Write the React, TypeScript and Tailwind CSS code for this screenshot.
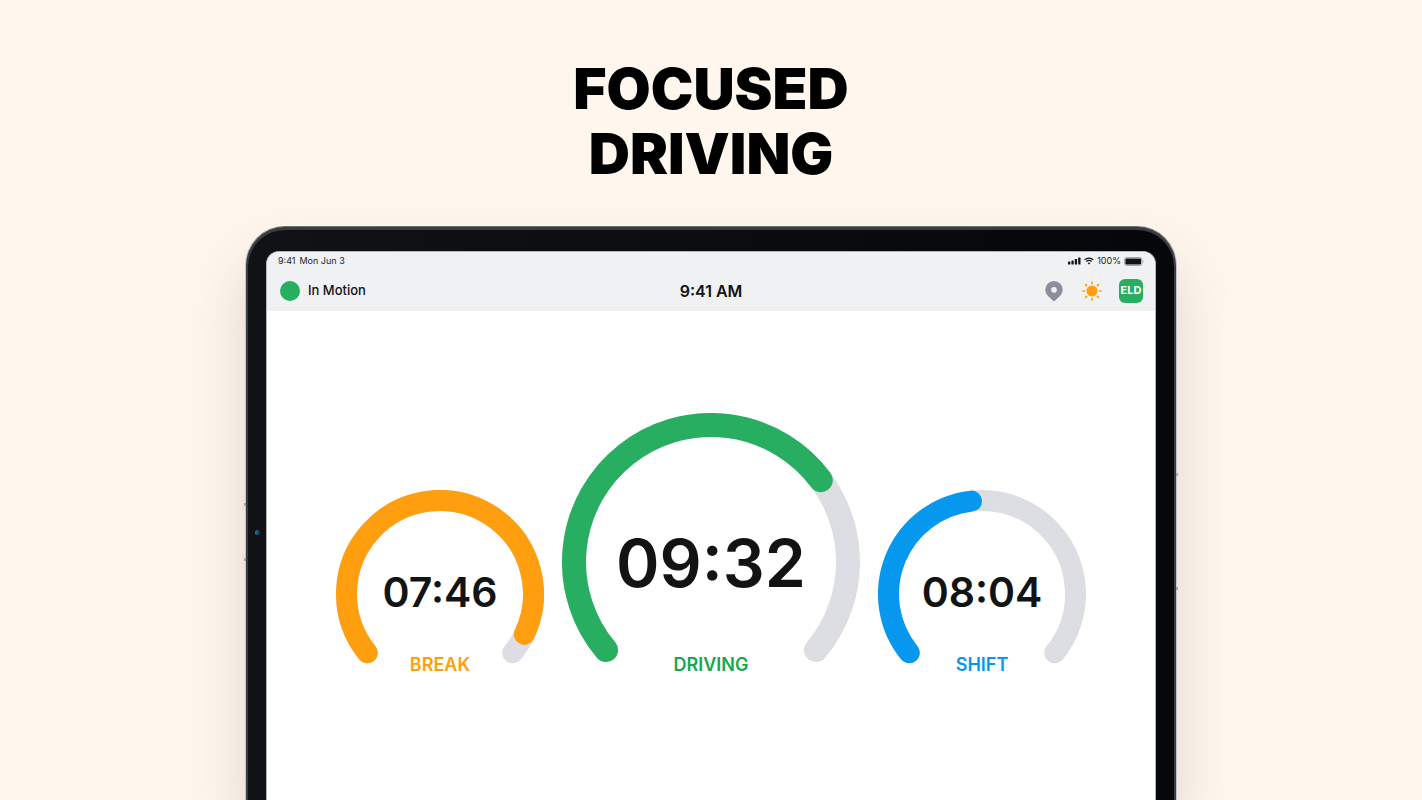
import React from 'react';
import clsx from 'clsx';

interface GaugeProps {
  label: string;
  time: string;
  // share of the track that is filled, 0 to 1
  value: number;
  color: string;
  labelClass: string;
  large?: boolean;
}

const TRACK_COLOR = '#dddee3';

function polar(cx: number, cy: number, r: number, deg: number) {
  const rad = (deg * Math.PI) / 180;
  return { x: cx + r * Math.cos(rad), y: cy + r * Math.sin(rad) };
}

function arcPath(cx: number, cy: number, r: number, start: number, sweep: number) {
  const from = polar(cx, cy, r, start);
  const to = polar(cx, cy, r, start + sweep);
  const largeArc = sweep > 180 ? 1 : 0;
  return `M ${from.x} ${from.y} A ${r} ${r} 0 ${largeArc} 1 ${to.x} ${to.y}`;
}

function Gauge({ label, time, value, color, labelClass, large = false }: GaugeProps) {
  const size = large ? 298 : 208;
  const height = large ? 252 : 175;
  const stroke = large ? 24 : 21;
  const c = size / 2;
  const r = (size - stroke) / 2;
  const start = large ? 140 : 141;
  const sweep = large ? 260 : 258;

  return (
    <section className="grid shrink-0 justify-items-center">
      <svg
        width={size}
        height={height}
        viewBox={`0 0 ${size} ${height}`}
        fill="none"
        strokeWidth={stroke}
        strokeLinecap="round"
        className="col-start-1 row-start-1 mb-[10px]"
      >
        <path d={arcPath(c, c, r, start, sweep)} stroke={TRACK_COLOR} />
        <path d={arcPath(c, c, r, start, sweep * value)} stroke={color} />
      </svg>
      <div className="col-start-1 row-start-1 flex flex-col items-center justify-end">
        <p
          className={clsx(
            'font-semibold text-[#121315]',
            large ? 'mb-14 text-[66px] leading-[72px]' : 'mb-10 text-[41px] leading-[46px]'
          )}
        >
          {time}
        </p>
        <h2 className={clsx('text-lg leading-5 font-semibold', labelClass)}>{label}</h2>
      </div>
    </section>
  );
}

function StatusBar() {
  return (
    <div className="flex h-[18px] items-center justify-between px-[11px] text-[9px] text-[#222325]">
      <div className="flex gap-1">
        <span>9:41</span>
        <span>Mon Jun 3</span>
      </div>
      <div className="flex items-center gap-[3px]">
        <svg width="13" height="8" viewBox="0 0 13 8" fill="#121315">
          <rect x="0" y="4.6" width="2.3" height="3" rx=".6" />
          <rect x="3.4" y="3.4" width="2.3" height="4.2" rx=".6" />
          <rect x="6.8" y="2" width="2.3" height="5.6" rx=".6" />
          <rect x="10.2" y=".4" width="2.3" height="7.2" rx=".6" />
        </svg>
        <svg width="10" height="8" viewBox="0 0 10 8" fill="none" stroke="#121315" strokeWidth="1.3">
          <path d="M.6 2.9C3.1.5 6.9.5 9.4 2.9" />
          <path d="M2.3 4.6c1.5-1.4 3.9-1.4 5.4 0" />
          <path d="M5 7.6 3.6 6.1c.8-.7 2-.7 2.8 0z" fill="#121315" stroke="none" />
        </svg>
        <span>100%</span>
        <svg width="20" height="9" viewBox="0 0 20 9" fill="none">
          <rect x=".5" y=".5" width="17.5" height="8" rx="2.2" stroke="#a2a4a7" />
          <rect x="1.4" y="1.4" width="15.7" height="6.2" rx="1.3" fill="#121315" />
          <path d="M18.9 3.2c.9.3.9 2.3 0 2.6z" fill="#a2a4a7" />
        </svg>
      </div>
    </div>
  );
}

function PinIcon() {
  return (
    <svg width="18" height="20" viewBox="0 0 18 20" fill="#8a8f9c">
      <path
        fillRule="evenodd"
        d="M9 0a8.7 8.7 0 0 0-8.7 8.7c0 3 1.5 5 3.3 6.8L7.8 19.4a1.7 1.7 0 0 0 2.4 0l4.2-3.9c1.8-1.8 3.3-3.8 3.3-6.8A8.7 8.7 0 0 0 9 0Zm0 6.1a2.8 2.8 0 1 1 0 5.6 2.8 2.8 0 0 1 0-5.6Z"
      />
    </svg>
  );
}

function SunIcon() {
  return (
    <svg width="20" height="20" viewBox="0 0 20 20" stroke="#ff9f0f" strokeWidth="1.7" strokeLinecap="round">
      <circle cx="10" cy="10" r="5.5" fill="#ff9f0f" stroke="none" />
      <path d="M10 1v1.4M10 17.6V19M1 10h1.4M17.6 10H19M3.6 3.6l1 1M15.4 15.4l1 1M3.6 16.4l1-1M15.4 4.6l1-1" />
    </svg>
  );
}

function Toolbar() {
  return (
    <header className="grid h-[41px] grid-cols-3 items-center px-3 text-[#121315]">
      <div className="flex items-center gap-2 pl-px">
        <span className="size-5 rounded-full bg-[#27ae60]" />
        <span className="text-[13px] font-medium">In Motion</span>
      </div>
      <p className="text-center text-base font-semibold">9:41 AM</p>
      <div className="flex items-center justify-end">
        <button type="button" aria-label="Location">
          <PinIcon />
        </button>
        <button type="button" aria-label="Day mode" className="mr-[17px] ml-[19px]">
          <SunIcon />
        </button>
        <button
          type="button"
          className="flex size-6 items-center justify-center rounded-md bg-[#27ae60] text-[11px] font-bold text-white"
        >
          ELD
        </button>
      </div>
    </header>
  );
}

function Tablet({ children }: { children: React.ReactNode }) {
  return (
    <div className="relative mx-auto flex w-full max-w-[932px] flex-1 flex-col rounded-t-[40px] bg-linear-to-b from-[#69716f] to-[#c3c6ca] to-6% px-px pt-px shadow-[0_32px_56px_rgba(60,40,50,0.17)]">
      <div className="flex flex-1 flex-col rounded-t-[39px] bg-[#3a3c3e] px-[2px] pt-[3px]">
        <div className="flex flex-1 flex-col rounded-t-[37px] bg-linear-to-r from-[#101216] to-[#060709] px-[18px] pt-[21px]">
          <div className="flex flex-1 flex-col overflow-hidden rounded-t-[13px] border-x border-t border-[#b4b6b8] bg-white">
            {children}
          </div>
        </div>
      </div>
      {/* front camera */}
      <span className="absolute top-[304px] left-[10px] size-[5px] rounded-full bg-linear-to-r from-[#1689b5] to-[#12264a]" />
      {/* antenna seams */}
      <span className="absolute top-[277px] -left-px h-[3px] w-[2px] bg-[#a5a3a5]" />
      <span className="absolute top-[332px] -left-px h-[3px] w-[2px] bg-[#a5a3a5]" />
      <span className="absolute top-[247px] -right-px h-[3px] w-[2px] bg-[#a5a3a5]" />
      <span className="absolute top-[361px] -right-px h-[3px] w-[2px] bg-[#a5a3a5]" />
    </div>
  );
}

export default function App() {
  return (
    <main className="flex min-h-screen flex-col overflow-hidden bg-[#fff7ed] font-['Inter',sans-serif]">
      <h1 className="pt-14 pb-10 text-center text-[57px] leading-[65px] font-black text-black">
        FOCUSED
        <br />
        DRIVING
      </h1>
      <Tablet>
        <div className="bg-[#f0f1f3]">
          <StatusBar />
          <Toolbar />
        </div>
        <div className="flex items-end justify-center gap-[18px] pt-[102px] pb-[126px]">
          <Gauge label="BREAK" time="07:46" value={0.948} color="#ff9f0f" labelClass="text-[#ff9f0f]" />
          <Gauge label="DRIVING" time="09:32" value={0.705} color="#27ae60" labelClass="text-[#16a850]" large />
          <Gauge label="SHIFT" time="08:04" value={0.475} color="#0598ee" labelClass="text-[#0598ee]" />
        </div>
      </Tablet>
    </main>
  );
}
